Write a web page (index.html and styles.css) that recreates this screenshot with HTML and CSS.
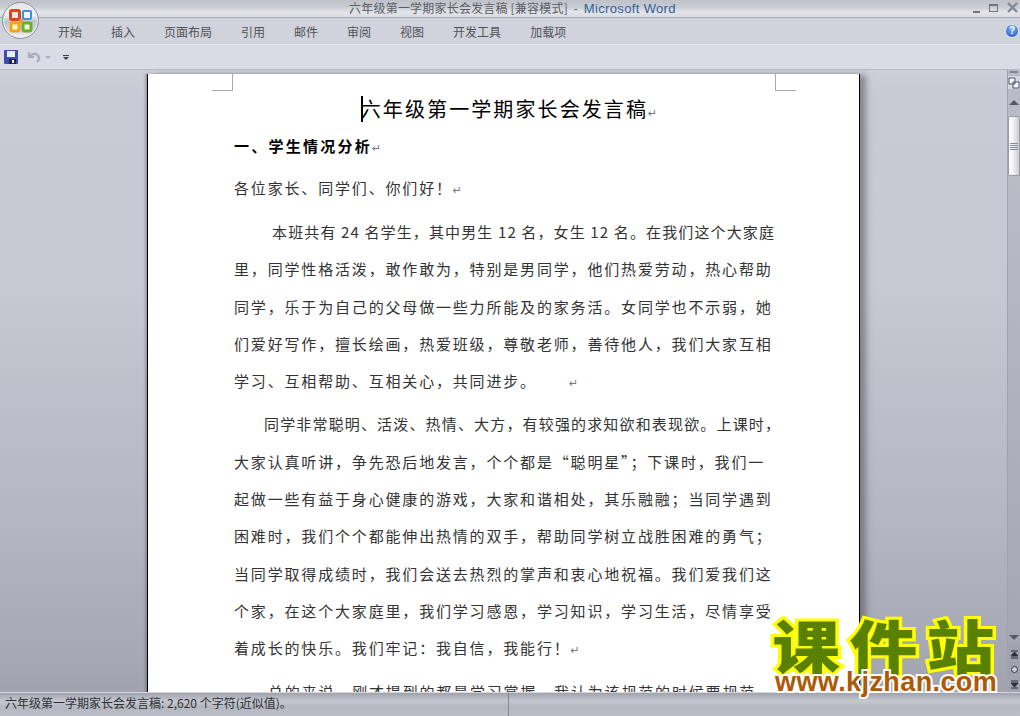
FILE: index.html
```html
<!DOCTYPE html>
<html lang="zh-CN">
<head>
    <meta charset="UTF-8">
    <title>六年级第一学期家长会发言稿 - Microsoft Word</title>
    <link rel="stylesheet" href="styles.css">
</head>
<body>
<div class="app">
    <div class="office-button">
        <svg width="24" height="24" viewBox="0 0 24 24">
            <rect x="1.500" y="1.500" width="9" height="9" rx="1.500" fill="#f5e6d8" stroke="#d9481c" stroke-width="3"/>
            <rect x="14" y="2" width="8" height="8" rx="1" fill="#eef4fa" stroke="#3d8fd6" stroke-width="2"/>
            <rect x="2" y="14" width="8" height="8" rx="1.500" fill="#fbf3dc" stroke="#f2a60c" stroke-width="3"/>
            <rect x="14" y="14" width="8" height="8" rx="1.500" fill="#e8f3dc" stroke="#6cae2e" stroke-width="3"/>
            <rect x="10" y="10" width="4" height="4" fill="#e8924a"/>
        </svg>
    </div>

    <header class="titlebar">
        <div class="title-text">六年级第一学期家长会发言稿 [兼容模式]&nbsp; - &nbsp;<span class="title-app">Microsoft Word</span></div>
        <div class="window-buttons">
            <span class="win-min"></span>
            <span class="win-max"></span>
            <svg width="11" height="11" viewBox="0 0 11 11"><path d="M1 1l9 9M10 1l-9 9" stroke="#7f8796" stroke-width="2.400"/></svg>
        </div>
    </header>

    <nav class="tabs">
        <a>开始</a><a>插入</a><a>页面布局</a><a>引用</a><a>邮件</a><a>审阅</a><a>视图</a><a>开发工具</a><a>加载项</a>
        <div class="help">?</div>
    </nav>

    <div class="quick-bar">
        <svg width="14" height="14" viewBox="0 0 14 14">
            <rect width="14" height="14" rx="1" fill="#3d4fae"/>
            <rect x="3" y="1" width="8" height="6" fill="#e9edf7"/>
            <rect x="5" y="9" width="7" height="5" fill="#20244a"/>
            <rect x="8" y="10" width="2" height="3" fill="#e9edf7"/>
        </svg>
        <svg class="undo" width="14" height="14" viewBox="0 0 14 14">
            <path d="M2 2v5h5M3 6.500C5 3.500 9 3 11 5.500c1.500 2 1 4.500-1 6.500" fill="none" stroke="#a9adb9" stroke-width="2.200"/>
        </svg>
        <span class="drop-arrow"></span>
        <span class="customize"></span>
    </div>

    <div class="main">
        <div class="workspace">
            <div class="page">
                <i class="crop crop-left"></i>
                <i class="crop crop-right"></i>
                <h1><span class="caret"></span>六年级第一学期家长会发言稿<em>↵</em></h1>
                <h2>一、学生情况分析<em>↵</em></h2>
                <p class="greeting">各位家长、同学们、你们好！<em>↵</em></p>

                <p>
                    <span class="line first-a">本班共有 24 名学生，其中男生 12 名，女生 12 名。在我们这个大家庭</span>
                    <span class="line">里，同学性格活泼，敢作敢为，特别是男同学，他们热爱劳动，热心帮助</span>
                    <span class="line">同学，乐于为自己的父母做一些力所能及的家务活。女同学也不示弱，她</span>
                    <span class="line">们爱好写作，擅长绘画，热爱班级，尊敬老师，善待他人，我们大家互相</span>
                    <span class="line">学习、互相帮助、互相关心，共同进步。<em class="far">↵</em></span>
                </p>

                <p>
                    <span class="line first-b">同学非常聪明、活泼、热情、大方，有较强的求知欲和表现欲。上课时，</span>
                    <span class="line">大家认真听讲，争先恐后地发言，个个都是“聪明星”；下课时，我们一</span>
                    <span class="line">起做一些有益于身心健康的游戏，大家和谐相处，其乐融融；当同学遇到</span>
                    <span class="line">困难时，我们个个都能伸出热情的双手，帮助同学树立战胜困难的勇气；</span>
                    <span class="line">当同学取得成绩时，我们会送去热烈的掌声和衷心地祝福。我们爱我们这</span>
                    <span class="line">个家，在这个大家庭里，我们学习感恩，学习知识，学习生活，尽情享受</span>
                    <span class="line">着成长的快乐。我们牢记：我自信，我能行！<em>↵</em></span>
                </p>

                <p>
                    <span class="line first-c">总的来说，刚才提到的都是学习掌握，我认为该规范的时候要规范</span>
                </p>
            </div>
        </div>

        <aside class="scrollbar">
            <div class="split-handle"></div>
            <div class="ruler-toggle">
                <svg width="12" height="12" viewBox="0 0 12 12"><path d="M1 1h6v6H1zM5 5h6v6H5z" fill="#f4f6fa" stroke="#4b5468"/></svg>
            </div>
            <div class="arrow-up"></div>
            <div class="thumb"><span></span><span></span><span></span><span></span></div>
            <div class="track"></div>
            <div class="arrow-down"></div>
            <div class="browse">
                <svg width="9" height="9" viewBox="0 0 9 9"><path d="M1 1h7M4.500 2L1 6h7zM1 8h7" fill="#2c3038" stroke="#2c3038"/></svg>
                <span class="browse-dot"></span>
                <svg width="9" height="9" viewBox="0 0 9 9"><path d="M1 1h7M4.500 7L1 3h7zM1 8h7" fill="#2c3038" stroke="#2c3038"/></svg>
            </div>
        </aside>
    </div>

    <footer class="statusbar">
        <div class="status-left">六年级第一学期家长会发言稿: 2,620 个字符(近似值)。</div>
        <div class="status-right"></div>
    </footer>

    <div class="watermark">
        <div class="wm-cn">课件站</div>
        <div class="wm-url">www.kjzhan.com</div>
    </div>
</div>
</body>
</html>
```

FILE: styles.css
```css
* {
    box-sizing: border-box;
}

html, body {
    margin: 0;
    height: 100%;
    overflow: hidden;
}

body {
    font-family: "Noto Sans CJK SC", "Liberation Sans", sans-serif;
    font-size: 12px;
    color: #222;
}

.app {
    position: relative;
    display: flex;
    flex-direction: column;
    width: 1020px;
    height: 716px;
    overflow: hidden;
    background: #cfd2da;
}

.office-button {
    position: absolute;
    left: 2px;
    top: 2px;
    width: 37px;
    height: 37px;
    border-radius: 50%;
    border: 1px solid #8d9099;
    box-shadow: inset 0 0 0 1px #eceef1;
    background: linear-gradient(#e4e5e9 0, #f2f3f5 35%, #c2c4cb 52%, #d6d8dd 80%, #f4f5f7 100%);
    display: flex;
    align-items: center;
    justify-content: center;
    z-index: 2;
}

.titlebar {
    height: 18px;
    display: flex;
    align-items: center;
    justify-content: center;
    position: relative;
    background: linear-gradient(#bfc2c9 0, #c8cbd2 40%, #e2e4e9 70%, #dadce2 100%);
    border-bottom: 1px solid #a6aab4;
}

.title-text {
    font-size: 12px;
    line-height: 16px;
    letter-spacing: 0.2px;
    color: #5a5d66;
    padding-left: 5px;
}

.title-app {
    color: #2f6199;
    font-family: "Liberation Sans", sans-serif;
    font-size: 13px;
    letter-spacing: 0.35px;
}

.window-buttons {
    position: absolute;
    right: 2px;
    top: 2px;
    display: flex;
    gap: 9px;
    align-items: center;
}

.win-min {
    width: 7px;
    height: 2px;
    margin-top: 8px;
    background: #6d7482;
}

.win-max {
    width: 9px;
    height: 8px;
    border: 1px solid #6d7482;
    border-top-width: 2px;
}

.tabs {
    height: 27px;
    display: flex;
    align-items: center;
    gap: 29px;
    padding-left: 58px;
    background: #d0d3db;
    border-bottom: 1px solid #e6e8ec;
    position: relative;
}

.tabs a {
    color: #4f5258;
    font-size: 12px;
}

.help {
    position: absolute;
    right: 1px;
    top: 6px;
    width: 14px;
    height: 14px;
    border-radius: 50%;
    background: radial-gradient(circle at 50% 30%, #7fb2f2, #1d55c0);
    color: #fff;
    border: 1px solid #dbe6f7;
    font: bold 10px/12px "Liberation Sans", sans-serif;
    text-align: center;
}

.quick-bar {
    height: 25px;
    display: flex;
    align-items: center;
    padding-left: 4px;
    background: #d9dce5;
    border-bottom: 1px solid #b8bbc4;
}

.undo {
    margin-left: 9px;
}

.drop-arrow {
    width: 0;
    height: 0;
    margin-left: 4px;
    border: 3px solid transparent;
    border-top: 3px solid #a9adb9;
    border-bottom: 0;
}

.customize {
    width: 6px;
    height: 5px;
    margin-left: 12px;
    border-top: 1px solid #3b3f48;
    position: relative;
}

.customize::after {
    content: "";
    position: absolute;
    left: 0;
    top: 1px;
    border: 3px solid transparent;
    border-top: 3px solid #3b3f48;
    border-bottom: 0;
}

.main {
    flex: 1;
    min-height: 0;
    display: flex;
}

.workspace {
    flex: 1;
    min-width: 0;
    padding: 4px 0 0 147px;
    overflow: hidden;
    background: linear-gradient(#cdd0d8 0, #cdd0d8 4px, #c8cbd4 22px, #c6c9d2 220px, #bfc2cb 300px, #b4b7c1 450px, #a4a7b2 600px, #a0a3ae 100%);
}

.page {
    position: relative;
    width: 713px;
    height: 700px;
    padding: 20px 82px 0 86px;
    background: #fff;
    border-left: 1px solid #000;
    border-right: 1px solid #000;
    box-shadow: 7px 0 6px -1px rgba(70, 72, 80, 0.5), -2px 0 2px rgba(70, 72, 80, 0.35);
    color: #333;
    font-size: 15px;
    line-height: 37.3px;
}

.crop {
    position: absolute;
    top: 0;
    width: 21px;
    height: 17px;
    border-bottom: 1px solid #a5a8b3;
}

.crop-left {
    left: 64px;
    border-right: 1px solid #a5a8b3;
}

.crop-right {
    right: 63px;
    border-left: 1px solid #a5a8b3;
}

h1 {
    position: relative;
    margin: 0;
    font-size: 20px;
    font-weight: 400;
    line-height: 30px;
    letter-spacing: 2.1px;
    color: #000;
    text-align: center;
    padding-left: 7px;
}

.caret {
    position: absolute;
    left: 127px;
    top: 2px;
    width: 2px;
    height: 26px;
    background: #000;
}

h2 {
    margin: 2px 0 0;
    font-size: 15px;
    font-weight: 700;
    line-height: 30px;
    letter-spacing: 2.25px;
    color: #000;
}

em {
    font-family: "DejaVu Sans", sans-serif;
    font-style: normal;
    font-weight: 400;
    font-size: 11px;
    letter-spacing: 0;
    color: #777;
}

p {
    margin: 0 0 3px;
    letter-spacing: 1.83px;
}

.greeting {
    margin: 6px 0 4px;
    line-height: 36px;
}

.line {
    display: block;
    white-space: nowrap;
}

.first-a {
    padding-left: 38px;
    letter-spacing: 1.13px;
}

.first-b {
    padding-left: 30px;
    letter-spacing: 1.16px;
}

.first-c {
    padding-left: 34px;
}

.far {
    margin-left: 32px;
}

.scrollbar {
    width: 13px;
    display: flex;
    flex-direction: column;
    background: #b9bcc5;
    border-left: 1px solid #a0a3ad;
}

.split-handle {
    height: 5px;
    margin-top: 1px;
    border-top: 2px solid #7f8390;
    margin-left: 2px;
    margin-right: 2px;
}

.ruler-toggle {
    height: 13px;
    display: flex;
    align-items: center;
    justify-content: center;
    background: #d5d8df;
}

.arrow-up {
    height: 27px;
    display: flex;
    align-items: center;
    justify-content: center;
}

.arrow-up::before,
.arrow-down::before {
    content: "";
    border: 5px solid transparent;
}

.arrow-up::before {
    border-bottom: 5px solid #555a66;
    border-top: 0;
}

.arrow-down::before {
    border-top: 5px solid #555a66;
    border-bottom: 0;
}

.thumb {
    height: 60px;
    display: flex;
    flex-direction: column;
    align-items: center;
    justify-content: center;
    gap: 1px;
    background: linear-gradient(90deg, #fff 0, #f1f2f5 40%, #c9ccd4 100%);
    border: 1px solid #9a9da8;
    border-radius: 2px;
}

.thumb span {
    width: 8px;
    height: 1px;
    background: #888c98;
}

.track {
    flex: 1;
    background: linear-gradient(#b9bcc5, #a5a8b3);
}

.arrow-down {
    height: 14px;
    display: flex;
    align-items: center;
    justify-content: center;
    background: #a5a8b3;
}

.browse {
    height: 48px;
    display: flex;
    flex-direction: column;
    align-items: center;
    justify-content: space-between;
    padding: 6px 0 3px;
    background: #a0a3ae;
}

.browse-dot {
    width: 7px;
    height: 7px;
    border-radius: 50%;
    border: 1px solid #34373f;
    background: #c8cad0;
}

.statusbar {
    height: 24px;
    display: flex;
    font-size: 12px;
    color: #2e3036;
    background: linear-gradient(#9fa2ac 0, #c6c8cf 8px, #b4b7c0 60%, #bcbfc7 100%);
    border-top: 1px solid #d5d7dc;
}

.status-left {
    width: 509px;
    padding-left: 5px;
    line-height: 20px;
    border-right: 1px solid #83868f;
}

.status-right {
    flex: 1;
}

.watermark {
    position: absolute;
    left: 771px;
    top: 611px;
    width: 232px;
}

.wm-cn {
    font-size: 58px;
    line-height: 66px;
    font-weight: 900;
    letter-spacing: 8px;
    white-space: nowrap;
    color: #5a8000;
    -webkit-text-stroke: 6px #ffff00;
    paint-order: stroke fill;
    transform: scaleX(1.17);
    transform-origin: left center;
    padding-left: 1px;
}

.wm-url {
    position: relative;
    font-family: "Liberation Sans", sans-serif;
    font-size: 27px;
    line-height: 26px;
    font-weight: 700;
    letter-spacing: 0.4px;
    color: #ad5a08;
    -webkit-text-stroke: 4px #fff;
    paint-order: stroke fill;
    white-space: nowrap;
    padding-left: 4px;
    margin-top: -8px;
}
```
